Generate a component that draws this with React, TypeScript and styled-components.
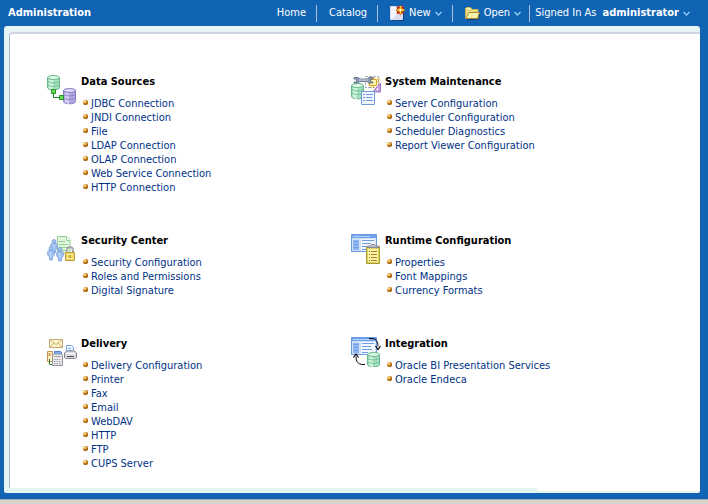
import React from "react";
import styled, { createGlobalStyle } from "styled-components";

const GlobalStyle = createGlobalStyle`
  *, *::before, *::after { box-sizing: border-box; }
  body {
    margin: 0;
    background: #1164b4;
    font-family: "DejaVu Sans Condensed", "Tahoma", "DejaVu Sans", sans-serif;
    font-size: 11px;
    line-height: 14px;
  }
`;

const Page = styled.div`
  display: flex;
  flex-direction: column;
  min-height: 100vh;
`;

const Header = styled.header`
  display: flex;
  align-items: center;
  justify-content: space-between;
  height: 26px;
  padding: 0 18px 0 8px;
  color: #fff;
`;

const Title = styled.h1`
  margin: 0;
  font-size: 11px;
  font-weight: bold;
`;

const Nav = styled.nav`
  display: flex;
  align-items: center;
  white-space: nowrap;
`;

const Divider = styled.span<{ $tight?: boolean }>`
  width: 1px;
  height: 17px;
  margin: ${(p) => (p.$tight ? "0 5px 0 8px" : "0 12px 0 10px")};
  background: #a9c0e0;
`;

const NavLink = styled.a`
  color: #fff;
  text-decoration: none;
`;

const MenuButton = styled.button`
  display: flex;
  align-items: center;
  gap: 4px;
  padding: 0;
  border: 0;
  background: none;
  color: #fff;
  font: inherit;
  cursor: pointer;
`;

const SignedIn = styled.span`
  margin-right: 6px;
`;

const Frame = styled.main`
  flex: 1;
  display: flex;
  flex-direction: column;
  margin: 0 8px 6px 4px;
  padding: 6px 0 0 5px;
  border-radius: 3px 3px 2px 2px;
  background: #e5f5f6;
`;

const Panel = styled.div`
  flex: 1;
  display: grid;
  grid-template-columns: 1fr 1fr;
  align-content: start;
  row-gap: 39px;
  padding: 41px 46px 17px 36px;
  border-top: 2px solid #cfd5e2;
  border-left: 1px solid #a6b3c8;
  border-top-left-radius: 4px;
  background: #fff;
`;

const BottomEdge = styled.div`
  display: flex;
  justify-content: flex-end;
  height: 5px;
`;

const BottomFill = styled.div`
  width: 163px;
  height: 3px;
  background: #fff;
`;

const StatusBar = styled.footer`
  height: 5px;
  border-top: 1px solid #a5a9b4;
  background: #d7d4cf;
`;

const Section = styled.section`
  display: flex;
  align-items: flex-start;
  gap: 3px;
`;

const Icon = styled.svg`
  flex: none;
  width: 32px;
  height: 32px;
  margin-top: -2px;
`;

const Heading = styled.h2`
  margin: 0 0 8px;
  color: #000;
  font-size: 11px;
  font-weight: bold;
`;

const LinkList = styled.ul`
  margin: 0;
  padding: 0 0 0 2px;
  list-style: none;
`;

const LinkItem = styled.li`
  display: flex;
  align-items: center;
  gap: 3px;
  height: 14px;
  white-space: nowrap;

  &::before {
    content: "";
    width: 5px;
    height: 5px;
    margin-bottom: 3px;
    border-radius: 2px;
    background: radial-gradient(circle at 35% 30%, #ffdf94 0 12%, #c07a12 45%, #6b3b04 100%);
  }
`;

const PageLink = styled.a`
  color: #003286;
  text-decoration: none;
`;

const Chevron = () => (
  <svg width="7" height="5" viewBox="0 0 7 5" fill="none" aria-hidden="true">
    <path d="M.5 1 3.5 4 6.5 1" stroke="#8fd0ee" strokeWidth="1.4" />
  </svg>
);

const NewIcon = () => (
  <svg width="15" height="17" viewBox="0 0 15 17" aria-hidden="true">
    <path d="M2 2h12v14H2z" fill="#0b4380" />
    <path d="M.5 1.5h12v13H.5z" fill="#f7f7ff" stroke="#d9dcf2" />
    <path d="M2 14 12 5v9z" fill="#d9d9f2" />
    <path d="m10.500 0 1.300 1.500L14 1l-.5 2.500L15 5l-1.500 1.500L14 9l-2.200-.5L10.500 10 9 8.500 6.500 9 7 6.500 5.500 5 7 3.500 6.500 1 9 1.500z" fill="#b62c16" />
    <path d="M10.500 1v8M6.500 5h8" stroke="#ffdc35" strokeWidth="1.500" />
    <path d="M8.500 3l4 4M12.500 3l-4 4" stroke="#ffb52a" />
    <path d="M9.500 4h2v2h-2z" fill="#fffbd2" />
  </svg>
);

const OpenIcon = () => (
  <svg width="15" height="13" viewBox="0 0 15 13" aria-hidden="true">
    <path d="M2 12.500h12l1-8" fill="none" stroke="#0b4380" />
    <path d="M.5 11.500v-10L1.500.5h4l1.500 2h6v9z" fill="#e9dc83" stroke="#c9b65a" />
    <path d="M.5 11.500 4 5.500h10.500l-2 6z" fill="#f7f1a8" stroke="#a98b32" />
    <path d="M1.500 1.500h4" stroke="#fff8c6" />
  </svg>
);

type DbProps = { x: number; y: number; h?: number; line: string; fill: string; light: string };

const Database = ({ x, y, h = 14, line, fill, light }: DbProps) => (
  <g transform={`translate(${x} ${y})`}>
    <path d={`M.5 2.500v${h - 4}c0 3 12 3 12 0v-${h - 4}`} fill={fill} stroke={line} />
    <path d={`M3 4v${h - 4}M5 4v${h - 3}`} stroke={light} strokeWidth="1.500" />
    <path d="M.5 6c1 2.500 11 2.500 12 0M.5 9.500c1 2.500 11 2.500 12 0" fill="none" stroke={line} strokeWidth=".8" />
    <ellipse cx="6.500" cy="2.500" rx="6" ry="2" fill={light} stroke={line} />
  </g>
);

const green = { line: "#63b98a", fill: "#a3dfbc", light: "#dcf7e6" };
const purple = { line: "#8379c4", fill: "#b0a8e0", light: "#ddd8f8" };

const Window = () => (
  <g>
    <path d="M1.500 2.500h25v17h-25z" fill="#cfe1fa" stroke="#6c98df" />
    <path d="M2 3h24v3H2z" fill="#6fa1ec" />
    <path d="M3 4.500h17" stroke="#b5d2fb" />
    <path d="M3 8h6v10H3z" fill="#8fb6f0" />
    <path d="M11 7h14v12H11z" fill="#f5f9ff" />
    <path d="M4 9.500h4M4 12.500h4M4 15.500h4M12 8.500h12M12 11.500h9M12 14.500h10M12 17.500h6" stroke="#6f9de4" />
  </g>
);

const DataSourcesIcon = () => (
  <Icon viewBox="0 0 32 32" aria-hidden="true">
    <Database x={1} y={2} {...green} />
    <Database x={17} y={15} h={15} {...purple} />
    <path d="M7.500 18v6.500H14" fill="none" stroke="#168a22" />
    <path d="M5.500 16.500h4v4h-4zM13.500 22.500h4v4h-4z" fill="#69dc55" stroke="#239128" />
  </Icon>
);

const MaintenanceIcon = () => (
  <Icon viewBox="0 0 32 32" aria-hidden="true">
    <path d="M15.500 3.500h13v11h-13z" fill="#fff" stroke="#8b8e94" strokeDasharray="2 2" />
    <path d="M21 4v3M24 4v3M27 6h3M27 9h3M21 12v3M24 12v3M18 11h2" stroke="#d4ab27" />
    <path d="M19.500 6.500h7v6h-7z" fill="#fff3b0" stroke="#d4a820" />
    <path d="M30.500 10v9h-8z" fill="#c8a3e2" stroke="#9d73bd" />
    <path d="M28 15v2h-2z" fill="#fff" />
    <Database x={1} y={10} h={15} {...green} />
    <path d="M4 4.500h4L10 6h7l2-1.500h4v1.500h-2.500v3H23V10h-4l-2-1.500h-7L8 10H4V9h2.500V6H4z" fill="#8e9ab3" stroke="#5e6a83" strokeWidth=".8" />
    <path d="M9 7h9" stroke="#d3d9e5" />
    <path d="M11.500 18.500h13v13h-13z" fill="#eef5ff" stroke="#7298d8" />
    <path d="M13 21.500h2M13 24.500h2M13 27.500h2M16 21.500h7M16 24.500h6M16 27.500h7" stroke="#6c98df" />
  </Icon>
);

const Person = ({ x, y }: { x: number; y: number }) => (
  <g transform={`translate(${x} ${y})`} fill="#a3c3f3" stroke="#6b93d4" strokeWidth=".7">
    <path d="M.7 5.500 2.500 4h3l1.800 1.500V9L6 10.500 5.200 14H2.800L2 10.500.7 9z" />
    <circle cx="4" cy="2.500" r="2" />
    <path d="M3.500 6v5" stroke="#d5e6ff" />
  </g>
);

const SecurityIcon = () => (
  <Icon viewBox="0 0 32 32" aria-hidden="true">
    <path d="M11.500 4.500H21l3 3v14H11.500z" fill="#dff6da" stroke="#93cf98" />
    <path d="M20.500 4.500v4H24" fill="#fff" stroke="#93cf98" />
    <path d="M13 9.500h6M13 12.500h9M13 15.500h9M13 18.500h8" stroke="#93cf98" />
    <Person x={4} y={7} />
    <Person x={1} y={14} />
    <Person x={10} y={15} />
    <path d="M21 22v-3c0-5 6-5 6 0v3" fill="none" stroke="#95969a" strokeWidth="2" />
    <path d="M21 21v-2c0-4 6-4 6 0" fill="none" stroke="#dedfe2" strokeWidth=".7" />
    <path d="M19.500 20.500h9v8h-9z" fill="#efd669" stroke="#bf9e3a" />
    <path d="M21 22.500h6M21 26.500h6" stroke="#fff0a4" />
    <path d="M24 23v3" stroke="#9e7a1c" />
  </Icon>
);

const RuntimeIcon = () => (
  <Icon viewBox="0 0 32 32" aria-hidden="true">
    <Window />
    <path d="M16.500 14.500h13v17h-13z" fill="#ddd35c" stroke="#a89b38" />
    <path d="M18 17h10v13H18z" fill="#fbf3a4" />
    <path d="M17.500 15.500h11v-1.500h-3l-1-1.500h-3l-1 1.500h-3z" fill="#c3c7ce" stroke="#858b96" />
    <path d="M19 19.500h1M19 22.500h1M19 25.500h1M19 28.500h1M21 19.500h6M21 22.500h6M21 25.500h6M21 28.500h6" stroke="#a98032" />
  </Icon>
);

const DeliveryIcon = () => (
  <Icon viewBox="0 0 32 32" aria-hidden="true">
    <path d="M3.500 4.500h13v8h-13z" fill="#fff4c9" stroke="#c0a670" />
    <path d="m4 5 6 4.500L16 5M4 12l4-4M16 12l-4-4" fill="none" stroke="#cdb27c" />
    <path d="M20.500 17v-6.500h5l2 2V17" fill="#eef5ff" stroke="#76a0e4" />
    <path d="M22 13.500h3M22 15.500h4" stroke="#80aaf0" />
    <path d="m18.500 18 2-2h8l2 2v4.500l-1.500 1h-9l-1.500-1z" fill="#dedee2" stroke="#85858d" />
    <path d="M20 18.500h9" stroke="#fff" />
    <path d="M21 21.500h7" stroke="#45474d" />
    <path d="M1.500 16.500h5v10h-5z" fill="#fff0c8" stroke="#c58f50" />
    <path d="M3.500 18v3" stroke="#cf9654" strokeWidth="2" />
    <path d="M3.500 24v5.500h4" fill="none" stroke="#288838" />
    <path d="M8.500 20v-3.500h6l1 1V20" fill="#79aaf3" stroke="#4b7ece" />
    <path d="m6.500 20 1-1h8l1 1v10.500h-10z" fill="#ececf0" stroke="#93939a" />
    <path d="M8 21.500h7" stroke="#a2a2a9" />
    <path d="M8 24.500h1.500m1 0H12m1 0h1.500M8 26.500h1.500m1 0H12m1 0h1.500M8 28.500h1.500m1 0H12m1 0h1.500" stroke="#9a9ba5" />
  </Icon>
);

const IntegrationIcon = () => (
  <Icon viewBox="0 0 32 32" aria-hidden="true">
    <Window />
    <Database x={17} y={17} {...green} />
    <path d="M19 3.500h3c4 0 6 3 6 8M15 29.500h-2c-5 0-7-3-7-8" fill="none" stroke="#000" />
    <path d="m25.500 11 2.500 3.500 2.500-3.500M3.500 22.500 6 19l2.500 3.500" fill="none" stroke="#000" strokeWidth="1.200" />
  </Icon>
);

const sections = [
  {
    title: "Data Sources",
    icon: DataSourcesIcon,
    links: ["JDBC Connection", "JNDI Connection", "File", "LDAP Connection", "OLAP Connection", "Web Service Connection", "HTTP Connection"],
  },
  {
    title: "System Maintenance",
    icon: MaintenanceIcon,
    links: ["Server Configuration", "Scheduler Configuration", "Scheduler Diagnostics", "Report Viewer Configuration"],
  },
  {
    title: "Security Center",
    icon: SecurityIcon,
    links: ["Security Configuration", "Roles and Permissions", "Digital Signature"],
  },
  {
    title: "Runtime Configuration",
    icon: RuntimeIcon,
    links: ["Properties", "Font Mappings", "Currency Formats"],
  },
  {
    title: "Delivery",
    icon: DeliveryIcon,
    links: ["Delivery Configuration", "Printer", "Fax", "Email", "WebDAV", "HTTP", "FTP", "CUPS Server"],
  },
  {
    title: "Integration",
    icon: IntegrationIcon,
    links: ["Oracle BI Presentation Services", "Oracle Endeca"],
  },
];

export default function App() {
  return (
    <Page>
      <GlobalStyle />
      <Header>
        <Title>Administration</Title>
        <Nav>
          <NavLink href="#home">Home</NavLink>
          <Divider />
          <NavLink href="#catalog">Catalog</NavLink>
          <Divider />
          <MenuButton type="button">
            <NewIcon />
            New
            <Chevron />
          </MenuButton>
          <Divider />
          <MenuButton type="button">
            <OpenIcon />
            Open
            <Chevron />
          </MenuButton>
          <Divider $tight />
          <SignedIn>Signed In As</SignedIn>
          <MenuButton type="button">
            <strong>administrator</strong>
            <Chevron />
          </MenuButton>
        </Nav>
      </Header>
      <Frame>
        <Panel>
          {sections.map(({ title, icon: SectionIcon, links }) => (
            <Section key={title}>
              <SectionIcon />
              <div>
                <Heading>{title}</Heading>
                <LinkList>
                  {links.map((label) => (
                    <LinkItem key={label}>
                      <PageLink href="#">{label}</PageLink>
                    </LinkItem>
                  ))}
                </LinkList>
              </div>
            </Section>
          ))}
        </Panel>
        <BottomEdge>
          <BottomFill />
        </BottomEdge>
      </Frame>
      <StatusBar />
    </Page>
  );
}
